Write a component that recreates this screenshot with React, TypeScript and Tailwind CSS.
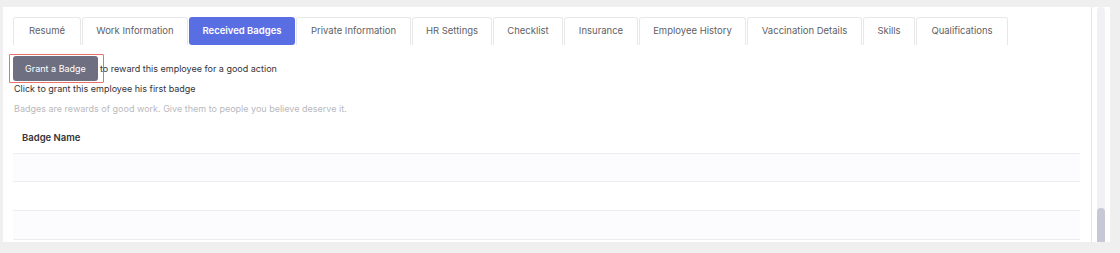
import React from "react";

const tabs = [
  { label: "Resumé", w: "w-[68px]" },
  { label: "Work Information", w: "w-[106px]" },
  { label: "Received Badges", w: "w-[106px]", active: true },
  { label: "Private Information", w: "w-[115px]" },
  { label: "HR Settings", w: "w-[80px]" },
  { label: "Checklist", w: "w-[70px]" },
  { label: "Insurance", w: "w-[74px]" },
  { label: "Employee History", w: "w-[107px]" },
  { label: "Vaccination Details", w: "w-[115px]" },
  { label: "Skills", w: "w-[52px]" },
  { label: "Qualifications", w: "w-[92px]" },
];

export default function App() {
  return (
    <div
      className="h-[253px] w-[1120px] bg-[#efeff0] pl-[3px] pr-[10px] pt-[7px] pb-[11px]"
      style={{ fontFamily: "Inter, 'Open Sans', sans-serif" }}
    >
      <div className="flex h-full bg-white">
        {/* Contenu */}
        <div className="flex-1 border-r border-[#e6e6e9] pl-[10px] pr-[10px] pt-[10px]">
          <div className="flex gap-px">
            {tabs.map((t) =>
              t.active ? (
                <div
                  key={t.label}
                  className={`${t.w} flex h-[28px] items-center justify-center rounded-[3px] bg-[#5a6ee3] text-[9.5px] font-semibold text-white`}
                >
                  {t.label}
                </div>
              ) : (
                <div
                  key={t.label}
                  className={`${t.w} flex h-[28px] items-center justify-center rounded-t-[3px] border border-b-0 border-[#e8e8ea] text-[9.5px] text-[#5f5f66]`}
                >
                  {t.label}
                </div>
              )
            )}
          </div>

          <div className="mt-[9px] flex h-[29px] items-center">
            <div className="-ml-[4px] flex h-[29px] w-[95px] items-center rounded-[1px] border border-[#e8716c] pl-[3px]">
              <button className="h-[25px] w-[85px] rounded-[3px] bg-[#6e6f80] text-[9px] leading-none text-white">
                Grant a Badge
              </button>
            </div>
            <span className="-ml-[4px] text-[9px] text-[#333338]">
              to reward this employee for a good action
            </span>
          </div>
          <p className="pl-px text-[9px] leading-[12px] text-[#333338]">
            Click to grant this employee his first badge
          </p>
          <p className="mt-[7px] pl-px text-[9px] leading-[14px] text-[#b9b9bd]">
            Badges are rewards of good work. Give them to people you believe deserve it.
          </p>

          <div className="mt-[15px] w-[1067px]">
            <div className="pl-[9px] text-[9.5px] font-semibold leading-[14px] text-[#333338]">
              Badge Name
            </div>
            <div className="mt-[8px] h-[29px] border-t border-b border-[#ededf0] bg-[#fcfbfe]" />
            <div className="h-[29px] border-b border-[#ededf0] bg-white" />
            <div className="h-[29px] border-b border-[#ededf0] bg-[#fcfbfe]" />
          </div>
        </div>

        {/* Barre de défilement */}
        <div className="flex w-[18px] justify-center">
          <div className="flex w-[8px] flex-col justify-end rounded-full bg-[#f1f1f4]">
            <div className="h-[34px] rounded-t-full bg-[#c7c8d6]" />
          </div>
        </div>
      </div>
    </div>
  );
}
